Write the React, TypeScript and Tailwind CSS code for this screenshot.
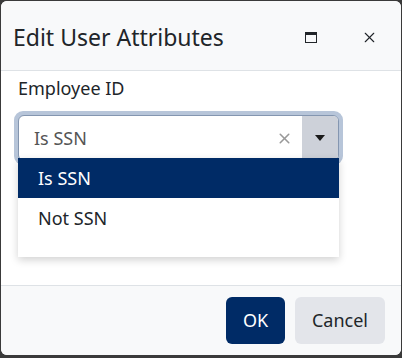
import { X } from "lucide-react";

const font = { fontFamily: '"Noto Sans", "Open Sans", sans-serif' };

const options = ["Is SSN", "Not SSN"];

export default function App() {
    return (
        <div
            className="h-[358px] w-[402px] bg-[#3a3a3a] pt-px px-px"
            style={font}
        >
            <div className="flex h-[354px] flex-col overflow-hidden rounded-md bg-white">
                <div className="flex h-[70px] shrink-0 items-center border-b border-[#dee2e6] bg-[#f8f9fa] pl-3 pr-[23px] pt-[4px]">
                    <h1 className="flex-1 text-[23px] leading-none text-[#212529]">
                        Edit User Attributes
                    </h1>
                    <div className="mr-[44px] h-[11px] w-[12px] border-[1.5px] border-t-[3px] border-[#212529]" />
                    <X className="h-[17px] w-[17px] text-[#212529]" strokeWidth={1.6} />
                </div>
                <div className="h-[215px] shrink-0 border-b border-[#dee2e6] px-[17px] pt-[4px]">
                    <p className="text-[18px] text-[#212529]">Employee ID</p>
                    <div className="relative mt-[9px] w-[321px]">
                        <div className="-mx-[4px] rounded-[9px] bg-[#b7c5d9] p-[4px]">
                            <div className="flex h-[46px] overflow-hidden rounded-[6px] border border-[#8496b0] bg-white">
                                <span className="flex flex-1 items-center pl-[15px] text-[18px] text-[#555]">
                                    Is SSN
                                </span>
                                <div className="flex w-[36px] items-center justify-center">
                                    <X className="h-[17px] w-[17px] text-[#999]" strokeWidth={2.2} />
                                </div>
                                <div className="flex w-[36px] items-center justify-center bg-[#cdd1d9]">
                                    <div className="h-0 w-0 border-x-[5px] border-t-[6px] border-x-transparent border-t-[#1a1a1a]" />
                                </div>
                            </div>
                        </div>
                        <ul className="absolute left-0 right-0 top-[47px] bg-white pb-[19px] shadow-[0_3px_8px_rgba(0,0,0,0.18)]">
                            {options.map((o, i) => (
                                <li
                                    key={o}
                                    className={
                                        i === 0
                                            ? "flex h-[40px] items-center bg-[#002b66] pl-[20px] text-[18px] text-white"
                                            : "flex h-[40px] items-center pl-[20px] text-[18px] text-[#212529]"
                                    }
                                >
                                    {o}
                                </li>
                            ))}
                        </ul>
                    </div>
                </div>
                <div className="flex flex-1 items-center justify-end gap-[10px] bg-[#f8f9fa] pr-[16px]">
                    <button className="h-[47px] w-[59px] rounded-[6px] bg-[#002b66] text-[18px] text-white">
                        OK
                    </button>
                    <button className="h-[47px] w-[90px] rounded-[6px] bg-[#e3e5ea] text-[18px] text-[#212529]">
                        Cancel
                    </button>
                </div>
            </div>
        </div>
    );
}
